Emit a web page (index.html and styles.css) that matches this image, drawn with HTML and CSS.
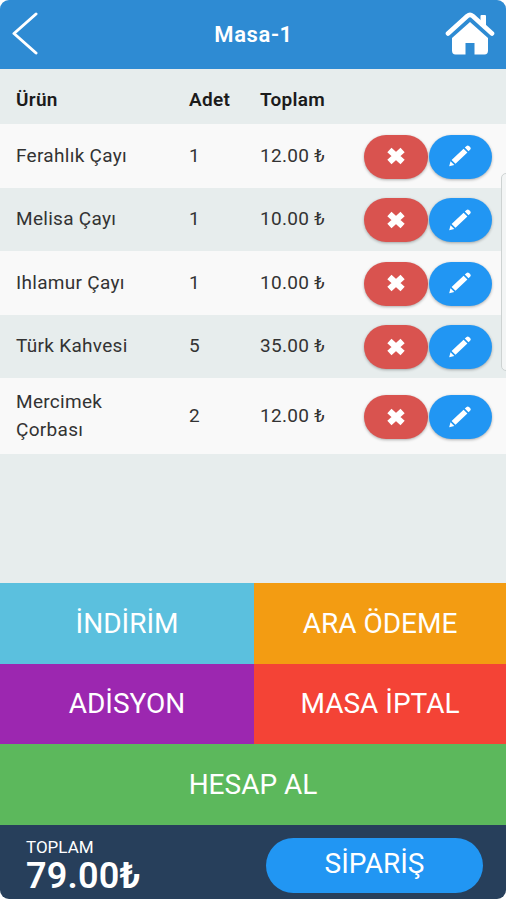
FILE: index.html
```html
<!DOCTYPE html>
<html lang="tr">
<head>
    <meta charset="UTF-8">
    <meta name="viewport" content="width=device-width, initial-scale=1.0">
    <title>Masa-1</title>
    <link rel="stylesheet" href="styles.css">
</head>
<body>

    <!-- icons -->
    <svg class="hidden">
        <symbol id="icon-delete" viewBox="0 0 20 18">
            <path d="M4 3.500 L16 14.500 M16 3.500 L4 14.500" fill="none" stroke="#fff" stroke-width="5.600"/>
        </symbol>
        <symbol id="icon-edit" viewBox="0 0 24 24">
            <path d="M1.200 22.200 L2.500 17.200 L6.300 20.900 Z M3.600 15.900 L15.600 4.700 L19.400 8.400 L7.500 19.800 Z M16.800 3.600 L18.600 1.900 Q19.800 .9 21 2 L22.300 3.300 Q23.300 4.500 22.300 5.600 L20.500 7.300 Z" fill="#fff"/>
        </symbol>
    </svg>

    <div class="app">
        <div class="header">
            <a href="#" class="header-link">
                <svg class="back-icon" viewBox="0 0 26 44"><path d="M24 2 L2 21.5 L24 41" fill="none" stroke="#fff" stroke-width="3" stroke-linecap="round" stroke-linejoin="round"/></svg>
            </a>
            <h1>Masa-1</h1>
            <a href="#" class="header-link">
                <svg class="home-icon" viewBox="0 0 50 44">
                    <path d="M3 22.5 L22.3 5 Q25 2.8 27.7 5 L47 22.5" fill="none" stroke="#fff" stroke-width="4.6" stroke-linecap="round" stroke-linejoin="round"/>
                    <path d="M35.500 5 Q35.500 4 36.500 4 H40 Q41 4 41 5 V16 L35.500 11 Z" fill="#fff"/>
                    <path d="M25 11 L43 27 V39.500 Q43 43.500 39.500 43.500 H29.500 V32 H20.500 V43.500 H10.500 Q7 43.500 7 39.500 V27 Z" fill="#fff"/>
                </svg>
            </a>
        </div>

        <div class="content">
            <table class="orders">
                <thead>
                    <tr>
                        <th class="col-product">Ürün</th>
                        <th class="col-count">Adet</th>
                        <th class="col-total">Toplam</th>
                        <th></th>
                    </tr>
                </thead>
                <tbody>
                    <tr>
                        <td>Ferahlık Çayı</td>
                        <td>1</td>
                        <td>12.00 ₺</td>
                        <td><div class="row-buttons">
                            <button class="btn-delete"><svg><use href="#icon-delete"/></svg></button>
                            <button class="btn-edit"><svg><use href="#icon-edit"/></svg></button>
                        </div></td>
                    </tr>
                    <tr>
                        <td>Melisa Çayı</td>
                        <td>1</td>
                        <td>10.00 ₺</td>
                        <td><div class="row-buttons">
                            <button class="btn-delete"><svg><use href="#icon-delete"/></svg></button>
                            <button class="btn-edit"><svg><use href="#icon-edit"/></svg></button>
                        </div></td>
                    </tr>
                    <tr>
                        <td>Ihlamur Çayı</td>
                        <td>1</td>
                        <td>10.00 ₺</td>
                        <td><div class="row-buttons">
                            <button class="btn-delete"><svg><use href="#icon-delete"/></svg></button>
                            <button class="btn-edit"><svg><use href="#icon-edit"/></svg></button>
                        </div></td>
                    </tr>
                    <tr>
                        <td>Türk Kahvesi</td>
                        <td>5</td>
                        <td>35.00 ₺</td>
                        <td><div class="row-buttons">
                            <button class="btn-delete"><svg><use href="#icon-delete"/></svg></button>
                            <button class="btn-edit"><svg><use href="#icon-edit"/></svg></button>
                        </div></td>
                    </tr>
                    <tr class="tall">
                        <td>Mercimek Çorbası</td>
                        <td>2</td>
                        <td>12.00 ₺</td>
                        <td><div class="row-buttons">
                            <button class="btn-delete"><svg><use href="#icon-delete"/></svg></button>
                            <button class="btn-edit"><svg><use href="#icon-edit"/></svg></button>
                        </div></td>
                    </tr>
                </tbody>
            </table>
            <div class="edge-handle"></div>
        </div>

        <div class="actions">
            <a href="#" class="action discount">İNDİRİM</a>
            <a href="#" class="action partial">ARA ÖDEME</a>
            <a href="#" class="action bill">ADİSYON</a>
            <a href="#" class="action cancel">MASA İPTAL</a>
            <a href="#" class="action checkout">HESAP AL</a>
        </div>

        <div class="footer">
            <div class="total">
                <span class="total-label">TOPLAM</span>
                <span class="total-value">79.00₺</span>
            </div>
            <button class="btn-order">SİPARİŞ</button>
        </div>
    </div>

</body>
</html>
```
FILE: styles.css
```css
* {
    box-sizing: border-box;
}

body {
    margin: 0;
    background-color: #fff;
    color: #333;
    font-family: Roboto, "Noto Sans", sans-serif;
}

.hidden {
    display: none;
}

.app {
    display: flex;
    flex-direction: column;
    height: 899px;
    border-radius: 9px;
    overflow: hidden;
    background-color: #e7eded;
}

/* top bar */
.header {
    display: flex;
    align-items: center;
    justify-content: space-between;
    height: 68.5px;
    padding: 0 11px 0 12px;
    background-color: #2e8bd3;
}

.header h1 {
    margin: 0;
    color: #fff;
    font-size: 22px;
    font-weight: 600;
    letter-spacing: 0.6px;
}

.header-link {
    display: flex;
    width: 50px;
}

.back-icon {
    width: 26px;
    height: 44px;
}

.home-icon {
    width: 50px;
    height: 44px;
    margin-top: -2px;
}

/* order list */
.content {
    position: relative;
    flex: 1;
}

.orders {
    width: 100%;
    table-layout: fixed;
    border-collapse: collapse;
    font-size: 19px;
    line-height: 28px;
    letter-spacing: 0.3px;
}

.orders th {
    height: 55.5px;
    padding: 8px 0 0;
    color: #1b1b1b;
    font-weight: 600;
    text-align: left;
}

.orders td {
    height: 63.5px;
    padding: 0;
}

.orders .tall td {
    height: 76px;
}

.orders th:first-child,
.orders td:first-child {
    padding-left: 16px;
    padding-right: 40px;
}

.orders tbody tr:nth-child(odd) {
    background-color: #f9f9f9;
}

.col-product {
    width: 189px;
}

.col-count {
    width: 71px;
}

.col-total {
    width: 104px;
}

.row-buttons {
    display: flex;
    gap: 1px;
    padding-top: 2px;
}

.row-buttons button {
    display: flex;
    align-items: center;
    justify-content: center;
    width: 63.5px;
    height: 44px;
    padding: 0;
    border: none;
    border-radius: 22px;
    box-shadow: 0 1px 3px rgba(0, 0, 0, 0.3);
}

.btn-delete {
    background-color: #d9534f;
}

.btn-edit {
    background-color: #2196f3;
}

.btn-delete svg {
    width: 22px;
    height: 20px;
    margin-bottom: 1px;
}

.btn-edit svg {
    width: 24px;
    height: 24px;
    margin-bottom: 1px;
}

.edge-handle {
    position: absolute;
    top: 104px;
    right: -6px;
    width: 11px;
    height: 198px;
    border: 1px solid #cdd2d2;
    border-radius: 5px;
    background-color: #f3f5f5;
}

/* action tiles */
.actions {
    display: grid;
    grid-template-columns: 254px 1fr;
    grid-template-rows: 80.5px 80px 81px;
}

.action {
    display: flex;
    align-items: center;
    justify-content: center;
    color: #fff;
    font-size: 28px;
    text-decoration: none;
}

.discount {
    background-color: #5bc0de;
}

.partial {
    background-color: #f39c12;
}

.bill {
    background-color: #9c27b0;
}

.cancel {
    background-color: #f44336;
}

.checkout {
    grid-column: 1 / 3;
    background-color: #5cb85c;
}

/* bottom bar */
.footer {
    display: flex;
    justify-content: space-between;
    height: 74.5px;
    padding: 13px 23px 0 26px;
    background-color: #273f5b;
    color: #fff;
}

.total {
    display: flex;
    flex-direction: column;
}

.total-label {
    margin-top: -1px;
    font-size: 17px;
    line-height: 20px;
}

.total-value {
    font-size: 36px;
    font-weight: 600;
    line-height: 39px;
    letter-spacing: 0.2px;
}

.btn-order {
    width: 217px;
    height: 55px;
    padding: 0 0 3px;
    border: none;
    border-radius: 28px;
    background-color: #2196f3;
    color: #fff;
    font-family: inherit;
    font-size: 28px;
}
```
